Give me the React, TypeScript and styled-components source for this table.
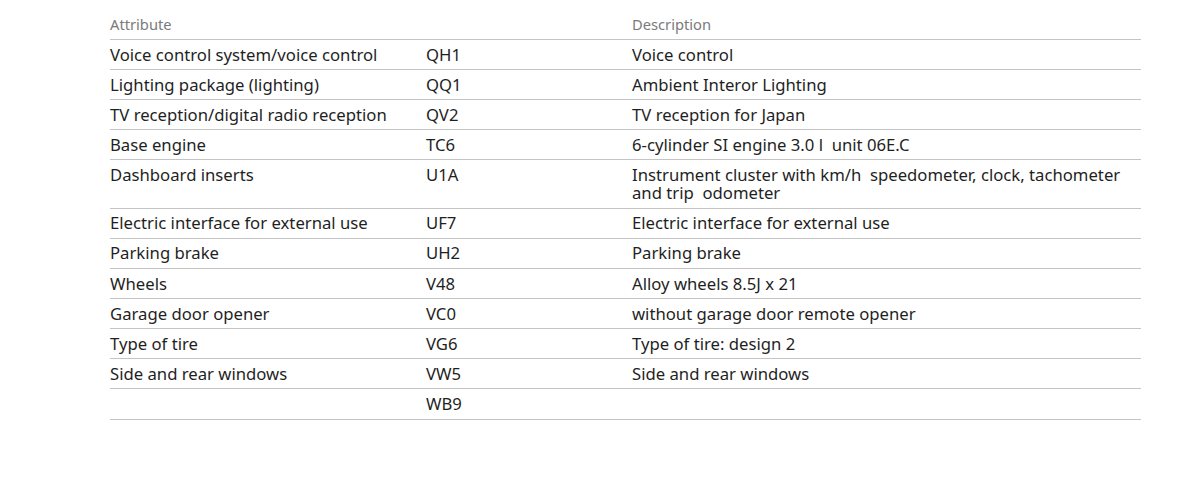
import React from "react";
import styled, { createGlobalStyle } from "styled-components";

const GlobalStyle = createGlobalStyle`
  html, body { margin: 0; padding: 0; background: #fff; }
  body { font-family: "Noto Sans", "Open Sans", sans-serif; color: #1f1f1f; }
`;

const Page = styled.div`
  padding: 10px 50px 0 110px;
`;

const Table = styled.table`
  width: 100%;
  border-collapse: collapse;
  table-layout: fixed;
  font-size: 16.7px;
  line-height: 18.4px;
`;

const HeadCell = styled.th<{ $w?: number }>`
  text-align: left;
  font-weight: 400;
  font-size: 14.7px;
  line-height: 19px;
  color: #7a7a7a;
  padding: 5px 0;
  border-bottom: 1px solid #c4c4c4;
  width: ${(p) => (p.$w ? `${p.$w}px` : "auto")};
`;

const Cell = styled.td`
  padding: 5.5px 0 5.2px;
  vertical-align: top;
  border-bottom: 1px solid #c4c4c4;
  white-space: pre-wrap;
`;

const rows: [string, string, string][] = [
  ["Voice control system/voice control", "QH1", "Voice control"],
  ["Lighting package (lighting)", "QQ1", "Ambient Interor Lighting"],
  ["TV reception/digital radio reception", "QV2", "TV reception for Japan"],
  ["Base engine", "TC6", "6-cylinder SI engine 3.0 l  unit 06E.C"],
  [
    "Dashboard inserts",
    "U1A",
    "Instrument cluster with km/h  speedometer, clock, tachometer and trip  odometer",
  ],
  ["Electric interface for external use", "UF7", "Electric interface for external use"],
  ["Parking brake", "UH2", "Parking brake"],
  ["Wheels", "V48", "Alloy wheels 8.5J x 21"],
  ["Garage door opener", "VC0", "without garage door remote opener"],
  ["Type of tire", "VG6", "Type of tire: design 2"],
  ["Side and rear windows", "VW5", "Side and rear windows"],
  ["", "WB9", ""],
];

export default function App() {
  return (
    <>
      <GlobalStyle />
      <Page>
        <Table>
          <thead>
            <tr>
              <HeadCell $w={316}>Attribute</HeadCell>
              <HeadCell $w={206}></HeadCell>
              <HeadCell>Description</HeadCell>
            </tr>
          </thead>
          <tbody>
            {rows.map(([a, c, d], i) => (
              <tr key={i}>
                <Cell>{a}</Cell>
                <Cell>{c}</Cell>
                <Cell>{d}</Cell>
              </tr>
            ))}
          </tbody>
        </Table>
      </Page>
    </>
  );
}
